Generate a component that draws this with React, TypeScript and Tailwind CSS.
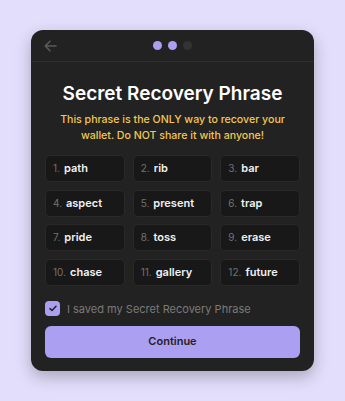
import React from "react";

const words = ["path","rib","bar","aspect","present","trap","pride","toss","erase","chase","gallery","future"];

export default function App() {
  return (
    <div className="min-h-screen w-full bg-[#e3defb] flex items-center justify-center" style={{ fontFamily: "Inter, 'Noto Sans', sans-serif" }}>
      <div className="w-[283px] h-[341px] bg-[#222222] rounded-[12px] shadow-[0_6px_16px_rgba(0,0,0,0.25)] flex flex-col overflow-hidden">
        <div className="h-[32px] shrink-0 border-b border-[#2e2e2e] relative flex items-center justify-center">
          <svg className="absolute left-[13px] top-[10px]" width="13" height="12" viewBox="0 0 13 12" fill="none">
            <path d="M12 6H1.5M6 1.2L1.2 6L6 10.8" stroke="#5a5a5a" strokeWidth="1.6" strokeLinecap="round" strokeLinejoin="round" />
          </svg>
          <div className="flex gap-[6px] items-center">
            <div className="w-[9px] h-[9px] rounded-full bg-[#ab9ff2]" />
            <div className="w-[9px] h-[9px] rounded-full bg-[#ab9ff2]" />
            <div className="w-[9px] h-[9px] rounded-full bg-[#333333]" />
          </div>
        </div>
        <div className="flex flex-col px-[14px] pt-[18px]">
          <h1 className="text-[19px] leading-[28px] font-semibold text-white text-center">Secret Recovery Phrase</h1>
          <p className="mt-[4px] text-[10.6px] leading-[16px] text-[#f5c84c] text-center font-medium">This phrase is the ONLY way to recover your wallet. Do NOT share it with anyone!</p>
          <div className="mt-[11px] grid grid-cols-3 gap-x-[8px] gap-y-[7.5px]">
            {words.map((w, i) => (
              <div key={i} className="h-[27px] rounded-[5px] bg-[#181818] border border-[#292929] flex items-center px-[7px] gap-[4px]">
                <span className="text-[10px] text-[#727272]">{i + 1}.</span>
                <span className="text-[11px] font-semibold text-[#f2f2f2]">{w}</span>
              </div>
            ))}
          </div>
          <div className="mt-[15px] flex items-center gap-[7px] h-[16px]">
            <div className="w-[15px] h-[15px] rounded-[4px] bg-[#ab9ff2] flex items-center justify-center">
              <svg width="8" height="7" viewBox="0 0 8 7" fill="none">
                <path d="M1 3.6L3 5.5L7 1.2" stroke="#222222" strokeWidth="1.5" strokeLinecap="round" strokeLinejoin="round" />
              </svg>
            </div>
            <span className="text-[11px] leading-[16px] text-[#7b7b7b]">I saved my Secret Recovery Phrase</span>
          </div>
          <button className="mt-[9px] h-[32px] w-full rounded-[6px] bg-[#ab9ff2] text-[#222222] text-[11px] font-semibold">Continue</button>
        </div>
      </div>
    </div>
  );
}
